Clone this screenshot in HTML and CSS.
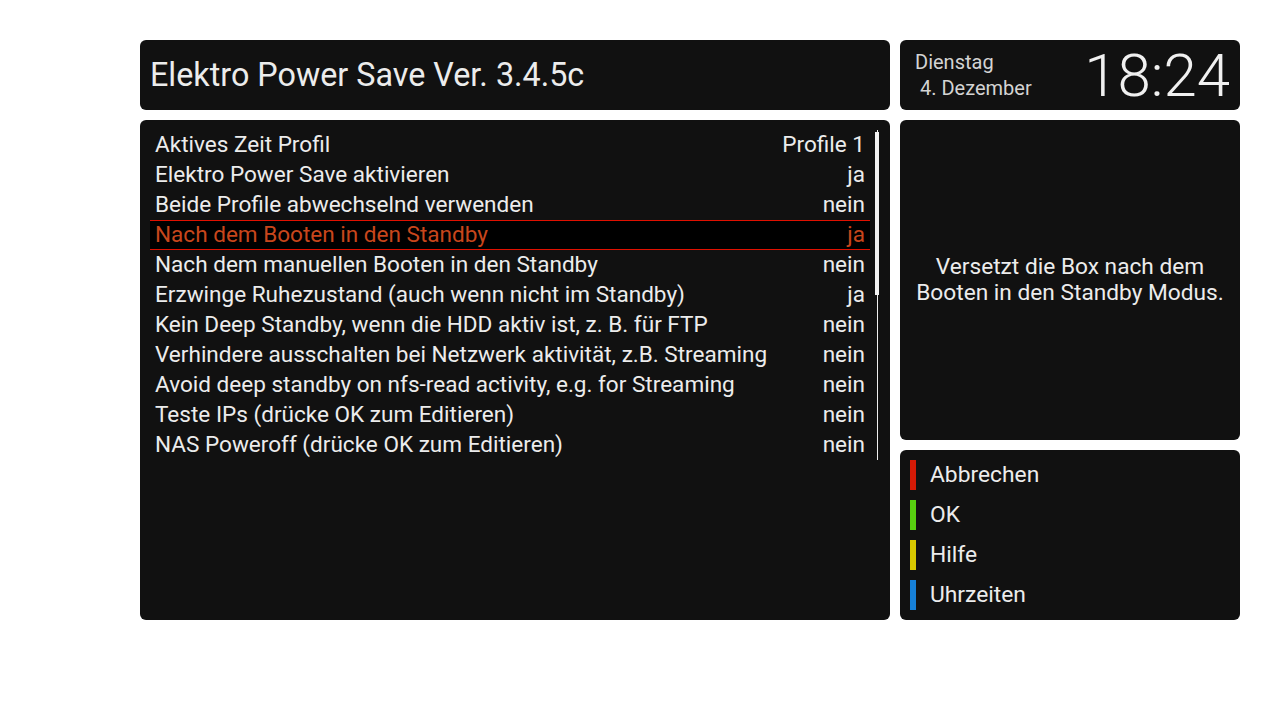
FILE: index.html
```html
<!DOCTYPE html>
<html lang="de">
<head>
<meta charset="utf-8">
<link rel="stylesheet" href="styles.css">
</head>
<body>
<div class="screen">
  <div class="left">
    <div class="panel title">Elektro Power Save Ver. 3.4.5c</div>
    <div class="panel list">
      <div class="rows">
        <div class="row"><span>Aktives Zeit Profil</span><span>Profile 1</span></div>
        <div class="row"><span>Elektro Power Save aktivieren</span><span>ja</span></div>
        <div class="row"><span>Beide Profile abwechselnd verwenden</span><span>nein</span></div>
        <div class="row sel"><span>Nach dem Booten in den Standby</span><span>ja</span></div>
        <div class="row"><span>Nach dem manuellen Booten in den Standby</span><span>nein</span></div>
        <div class="row"><span>Erzwinge Ruhezustand (auch wenn nicht im Standby)</span><span>ja</span></div>
        <div class="row"><span>Kein Deep Standby, wenn die HDD aktiv ist, z. B. für FTP</span><span>nein</span></div>
        <div class="row"><span>Verhindere ausschalten bei Netzwerk aktivität, z.B. Streaming</span><span>nein</span></div>
        <div class="row"><span>Avoid deep standby on nfs-read activity, e.g. for Streaming</span><span>nein</span></div>
        <div class="row"><span>Teste IPs (drücke OK zum Editieren)</span><span>nein</span></div>
        <div class="row"><span>NAS Poweroff (drücke OK zum Editieren)</span><span>nein</span></div>
      </div>
      <div class="scroll"><div class="thumb"></div></div>
    </div>
  </div>
  <div class="right">
    <div class="panel clock">
      <div class="date">
        <div class="day">Dienstag</div>
        <div class="dm">4. Dezember</div>
      </div>
      <div class="time">18:24</div>
    </div>
    <div class="panel desc">Versetzt die Box nach dem Booten in den Standby Modus.</div>
    <div class="panel keys">
      <div class="key"><i class="bar red"></i><span>Abbrechen</span></div>
      <div class="key"><i class="bar green"></i><span>OK</span></div>
      <div class="key"><i class="bar yellow"></i><span>Hilfe</span></div>
      <div class="key"><i class="bar blue"></i><span>Uhrzeiten</span></div>
    </div>
  </div>
</div>
</body>
</html>
```
FILE: styles.css
```css
html, body { margin: 0; padding: 0; background: #fff; }
body { width: 1280px; height: 720px; font-family: Roboto, "Noto Sans", sans-serif; color: #ececec; }
.screen { display: flex; gap: 10px; padding: 40px 40px 0 140px; }
.left { width: 750px; display: flex; flex-direction: column; gap: 10px; }
.right { width: 340px; display: flex; flex-direction: column; gap: 10px; }
.panel { background: #111111; border-radius: 6px; }
.title { height: 70px; display: flex; align-items: center; padding-left: 10px; font-size: 32.3px; box-sizing: border-box; padding-bottom: 1px; }
.list { height: 500px; display: flex; padding: 10px 0 0 10px; box-sizing: border-box; }
.rows { width: 720px; }
.row { height: 30px; display: flex; justify-content: space-between; align-items: center; padding: 0 5px 2px; font-size: 22.55px; box-sizing: border-box; white-space: nowrap; }
.row.sel { background: #000; color: #c8461c; border-top: 1px solid #e01000; border-bottom: 1px solid #e01000; padding-bottom: 1px; }
.scroll { margin-left: 5px; width: 5px; height: 330px; position: relative; display: flex; justify-content: center; }
.scroll::before { content: ""; width: 1px; height: 100%; background: #eee; }
.thumb { position: absolute; top: 2px; left: 0; width: 4px; height: 163px; background: #f2f2f2; }
.clock { height: 70px; display: flex; justify-content: space-between; align-items: center; padding: 0 10px 0 15px; box-sizing: border-box; }
.date { font-size: 20px; color: #d4d4d4; line-height: 26px; margin-top: -1px; }
.dm { padding-left: 5px; }
.time { font-size: 60px; font-weight: 300; letter-spacing: 0px; color: #f0f0f0; }
.desc { height: 320px; display: flex; align-items: center; justify-content: center; text-align: center; font-size: 22.7px; line-height: 26px; padding: 0 10px; box-sizing: border-box; }
.keys { height: 170px; padding: 10px 10px; box-sizing: border-box; display: flex; flex-direction: column; gap: 10px; }
.key { display: flex; align-items: center; height: 30px; font-size: 22.8px; }
.key span { margin-top: -2px; }
.bar { display: block; width: 6px; height: 30px; margin-right: 14px; }
.red { background: #d41a06; }
.green { background: #58d010; }
.yellow { background: #d8c800; }
.blue { background: #1680d8; }
```
